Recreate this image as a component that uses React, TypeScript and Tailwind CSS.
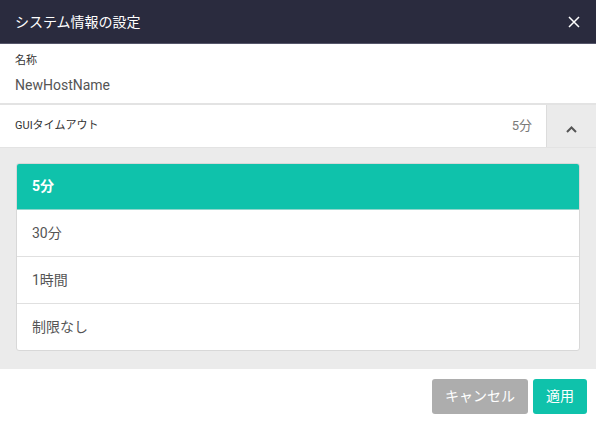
import React from "react";

const font = { fontFamily: 'Roboto, "Noto Sans CJK JP", sans-serif' };

export default function App() {
  const items = ["5分", "30分", "1時間", "制限なし"];
  return (
    <div className="w-[596px] h-[422px] bg-white flex flex-col overflow-hidden" style={font}>
      <div className="h-[44px] shrink-0 bg-[#2a2b3e] border-b border-[#55566a] flex items-center justify-between pl-[15px] pr-[16px]">
        <span className="text-white text-[14px] leading-none">システム情報の設定</span>
        <svg width="12" height="12" viewBox="0 0 12 12">
          <path d="M1 1 L11 11 M11 1 L1 11" stroke="white" strokeWidth="1.5" />
        </svg>
      </div>
      <div className="h-[59px] shrink-0 flex flex-col px-[15px] pt-[10px]">
        <span className="text-[11px] leading-[14px] text-[#333]">名称</span>
        <span className="text-[14px] leading-[18px] text-[#555] mt-[8px]">NewHostName</span>
      </div>
      <div className="h-[45px] shrink-0 flex border-t-2 border-b border-[#e3e3e3]">
        <div className="flex-1 flex items-center justify-between pl-[15px] pr-[14px] bg-white">
          <span className="text-[11px] text-[#333]">GUIタイムアウト</span>
          <span className="text-[13px] text-[#7a7a7a]">5分</span>
        </div>
        <div className="w-[50px] bg-[#ebebeb] border-l border-[#dcdcdc] flex items-center justify-center pt-[6px]">
          <svg width="11" height="7" viewBox="0 0 11 7">
            <path d="M1 6 L5.5 1.5 L10 6" stroke="#555" strokeWidth="2" fill="none" />
          </svg>
        </div>
      </div>
      <div className="h-[221px] shrink-0 bg-[#ebebeb] px-[16px] pt-[15px]">
        <div className="rounded-[3px] border border-[#d8d8d8] bg-white overflow-hidden">
          {items.map((t, i) => (
            <div
              key={t}
              className={
                i === 0
                  ? "h-[46px] flex items-center px-[15px] bg-[#0fc2ab] text-white font-bold text-[14px] border-b border-[#8fd6cc]"
                  : i < 3
                  ? "h-[47px] flex items-center px-[15px] text-[#555] text-[14px] border-b border-[#e0e0e0]"
                  : "h-[46px] flex items-center px-[15px] text-[#555] text-[14px]"
              }
            >
              {t}
            </div>
          ))}
        </div>
      </div>
      <div className="flex-1 flex justify-end items-start pt-[10px] pr-[9px] gap-[5px]">
        <button className="w-[96px] h-[35px] rounded-[3px] bg-[#adadad] text-white text-[14px]">キャンセル</button>
        <button className="w-[54px] h-[35px] rounded-[3px] bg-[#0fc2ab] text-white text-[14px]">適用</button>
      </div>
    </div>
  );
}
